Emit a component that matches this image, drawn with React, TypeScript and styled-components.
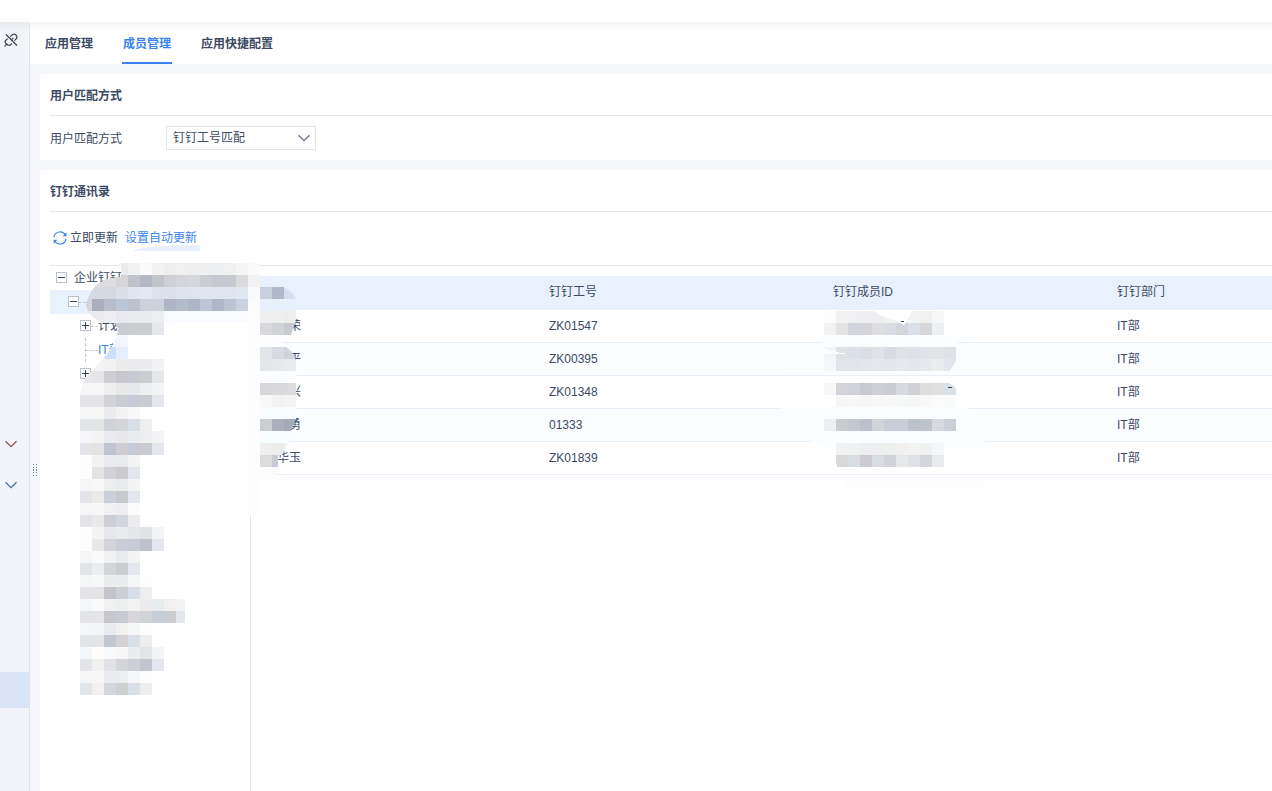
import React from 'react';
import styled, { createGlobalStyle, css } from 'styled-components';

const GlobalStyle = createGlobalStyle`
  * { box-sizing: border-box; }
  body {
    margin: 0;
    background: #fff;
    color: #3b4963;
    font-family: "Liberation Sans", "Noto Sans CJK SC", sans-serif;
    font-size: 12px;
    line-height: 18px;
  }
  button, select { font: inherit; color: inherit; }
`;

const Page = styled.div`
  display: flex;
  flex-direction: column;
  height: 100vh;
  overflow: hidden;
`;

const TopBar = styled.header`
  flex: none;
  height: 22px;
  background: #fff;
`;

const Body = styled.div`
  display: flex;
  flex: 1;
  min-height: 0;
`;

const Sidebar = styled.nav`
  flex: none;
  display: flex;
  flex-direction: column;
  width: 30px;
  border-right: 1px solid #dfe3ea;
  background: linear-gradient(#e9ebef, #f2f4f9 10px);
`;

const SideButton = styled.button<{ $color?: string; $active?: boolean; $push?: number }>`
  flex: none;
  display: flex;
  align-items: center;
  height: 36px;
  margin: ${(p) => p.$push ?? 0}px 0 0;
  padding: 0 0 0 4px;
  border: 0;
  background: ${(p) => (p.$active ? '#d9e4f7' : 'transparent')};
  color: ${(p) => p.$color ?? '#39404d'};
`;

const Main = styled.main`
  flex: 1;
  min-width: 0;
  display: flex;
  flex-direction: column;
  background: #f6f7fa;
`;

const Tabs = styled.div`
  flex: none;
  display: flex;
  gap: 28px;
  height: 42px;
  padding-left: 14px;
  background: linear-gradient(#f4f5f6, #fff 10px);
`;

const Tab = styled.button<{ $active?: boolean }>`
  padding: 4px 1px 0;
  border: 0;
  border-bottom: 2px solid transparent;
  background: none;
  font-weight: 700;
  ${(p) =>
    p.$active &&
    css`
      color: #3a84f0;
      border-bottom-color: #3a84f0;
    `}
`;

const Content = styled.div`
  flex: 1;
  min-height: 0;
  display: flex;
`;

const Gutter = styled.div`
  flex: none;
  width: 10px;
  padding: 400px 0 0 3px;
`;

const Panels = styled.div`
  flex: 1;
  min-width: 0;
  display: flex;
  flex-direction: column;
  gap: 10px;
  padding-top: 10px;
`;

const Card = styled.section<{ $grow?: boolean }>`
  position: relative;
  display: flex;
  flex-direction: column;
  flex: ${(p) => (p.$grow ? '1' : 'none')};
  min-height: 0;
  padding-left: 10px;
  background: #fff;
`;

const CardTitle = styled.h2`
  flex: none;
  margin: 0;
  height: 42px;
  border-bottom: 1px solid #e7e8ea;
  font-size: 12px;
  line-height: 44px;
`;

const Field = styled.div`
  display: flex;
  align-items: center;
  height: 44px;
`;

const Label = styled.label`
  width: 116px;
  padding-top: 2px;
`;

const SelectBox = styled.span`
  display: grid;
  align-items: center;
  width: 150px;
  height: 24px;
  border: 1px solid #e3e5e8;
  > * { grid-area: 1 / 1; }
  > svg { justify-self: end; margin-right: 5px; color: #66728a; pointer-events: none; }
`;

const Select = styled.select`
  appearance: none;
  width: 100%;
  height: 22px;
  padding: 0 24px 0 6px;
  border: 0;
  background: transparent;
`;

const Toolbar = styled.div`
  flex: none;
  display: flex;
  align-items: center;
  gap: 7px;
  height: 54px;
  padding: 0 0 2px 3px;
  border-bottom: 1px solid #e7e8ea;
`;

const ToolButton = styled.button`
  display: flex;
  align-items: center;
  gap: 3px;
  padding: 0;
  border: 0;
  background: none;
`;

const ToolLink = styled.a`
  color: #3a84f0;
  text-decoration: none;
`;

const Split = styled.div`
  flex: 1;
  min-height: 0;
  display: flex;
`;

const Tree = styled.ul`
  flex: none;
  width: 201px;
  margin: 0;
  padding: 0;
  border-right: 1px solid #e6e7e9;
  list-style: none;
`;

const TreeRow = styled.li<{ $level: number; $selected?: boolean; $link?: boolean }>`
  display: flex;
  align-items: center;
  height: 24px;
  padding-left: ${(p) => 6 + p.$level * 12}px;
  background: ${(p) => (p.$selected ? '#e8f1fd' : 'transparent')};
  color: ${(p) => (p.$link ? '#3a84f0' : 'inherit')};
`;

const TreeLabel = styled.span<{ $root?: boolean }>`
  padding-left: ${(p) => (p.$root ? 7 : 0)}px;
`;

const Toggle = styled.button`
  display: flex;
  padding: 0 0 1px;
  border: 0;
  background: transparent;
`;

const Dash = styled.span<{ $wide?: boolean }>`
  width: ${(p) => (p.$wide ? 12 : 7)}px;
  border-top: 1px dashed #c4c8cf;
`;

const Stem = styled.span`
  width: 6px;
  height: 24px;
  border-right: 1px dashed #c4c8cf;
`;

const TableArea = styled.div`
  flex: 1;
  min-width: 0;
  overflow: hidden;
  padding: 10px 0 0 9px;
`;

const Table = styled.table`
  width: 1136px;
  table-layout: fixed;
  border-collapse: separate;
  border-spacing: 0;
  text-align: left;
`;

const HeadCell = styled.th`
  height: 34px;
  padding: 0 5px 2px;
  background: #e8f1fd;
  font-weight: 400;
`;

const Row = styled.tr`
  &:nth-child(even) { background: #fafcff; }
`;

const Cell = styled.td`
  height: 33px;
  padding: 0 5px;
  border-bottom: 1px solid #e8f0fb;
`;

const Name = styled.span`
  display: inline-block;
  width: 36px;
  text-align: right;
`;

const MaskLayer = styled.svg`
  position: absolute;
  top: 0;
  left: 0;
  width: 100%;
  height: 100%;
  pointer-events: none;
`;

const Chevron = () => (
  <svg width="13" height="8" viewBox="0 0 13 8" fill="none" stroke="currentColor" strokeWidth="1.2" aria-hidden="true">
    <path d="M1.5 1.2 7 6.6 12.5 1.2" />
  </svg>
);

const PlugIcon = () => (
  <svg width="14" height="14" viewBox="0 0 14 14" fill="none" stroke="currentColor" strokeWidth="1.2" aria-hidden="true">
    <path d="M2 1.5 13 12.5" />
    <path d="M6.3 3.6 8.4 1.6Q10.4 .4 12.1 2.1Q13.6 3.8 12.4 5.6L10.4 7.7" />
    <path d="M3.6 5.6 1.4 7.7Q.6 9 1.8 10.2L3.8 12Q5.2 12.8 6.4 11.8L8 10.4" />
    <path d="M.6 13.4 2.6 11.2M9.4 4.8 7.6 6.6" />
  </svg>
);

const RefreshIcon = () => (
  <svg width="14" height="14" viewBox="0 0 14 14" fill="none" stroke="#3a84f0" strokeWidth="1.1" aria-hidden="true">
    <path d="M1 6.4A6 6 0 0 1 12.4 4.4M13 7.6A6 6 0 0 1 1.6 9.6" />
    <path d="M13.4 1.2v4H9.6ZM.6 12.8v-4h3.8Z" fill="#3a84f0" stroke="none" />
  </svg>
);

const Expander = ({ open, name }: { open?: boolean; name: string }) => (
  <Toggle type="button" aria-expanded={!!open} aria-label={name}>
    <svg width="11" height="11" viewBox="0 0 11 11" fill="none" aria-hidden="true">
      <rect x=".5" y=".5" width="10" height="10" fill="#fff" stroke="#bcc1cc" />
      <path d={open ? 'M2 5.5h7' : 'M2 5.5h7M5.5 2v7'} stroke="#36445f" />
    </svg>
  </Toggle>
);

const Grip = () => (
  <svg width="5" height="13" viewBox="0 0 5 13" fill="#6f80a8" aria-hidden="true">
    {[0, 3, 5, 6, 8, 11].map((y) => (
      <path key={y} d={`M0 ${y}h1v1H0zM3 ${y}h1v1H3z`} />
    ))}
  </svg>
);

const CELL = 12;

/* Mosaic rows: first column, row number, one colour for each cell. */
type MosaicRow = [number, number, string];

const treeMosaic: MosaicRow[] = [
  [3, 0, 'ececee f1f2f4 fafafa f2f2f3 eeeeef f0f0f1 f0eff0 eeeff1 eeeff1 eff0f0 f5f5f6 fafafb'],
  [0, 1, 'dedee2 dedee2 dedee2 d5d5da c0c3c8 b4b8c4 c2c6cc cfcfd5 d5d4d8 d5d8db cccdd1 c6c9d0 c6c9d0 d9dbdd f2f2f2'],
  [0, 2, 'd5d9e1 d5d9e1 d5d9e1 dbdfe6 e0e5f0 e2e7f1 dce2ec dbe0ea dde4ee dee5ee dfe4ef e0e6f0 dee5ef e1e7f1 f7f9fc'],
  [0, 3, 'd5d5db a9afbd b7bdc9 bbc7d6 bcc2cd cdd1da ccd1dc aeb5c4 b3bcc9 aeb6c5 bec5d4 b0b8c8 bcc4d3 cad0de fafbfd'],
  [0, 4, 'eaeaec eaeaec eeeef0 e8e9ee e9ebef eaebee ecedf1 fafbfe fafbfe fafbfe fafbfe fafbfe fafbfe fafbfe fcfcfd'],
  [3, 5, 'cbccd1 cccdd1 cdced2 e4e7eb'],
  [2, 6, 'f3f6ff f3f6ff'],
  [2, 7, 'cddefb e6eefd'],
  [0, 8, 'f4f4f5 f4f4f5 f1f1f2 ececed eaebec ececee f1f2f4'],
  [0, 9, 'e8e8eb e5e5e7 cfcfd3 c8c9ce c6cbd4 cccdd1 e4e6ea'],
  [0, 10, 'f5f6f7 f6f6f6 efeff0 e8e8ea e6e9ec edeef0 f2f3f5'],
  [0, 11, 'e3e4e8 e4e4e6 d2d2d7 c9cdd1 c6cad6 cacbcf e3e7ed'],
  [0, 12, 'f5f6f8 f6f6f5 ebecf0 f3f3f3 f7f8fa'],
  [0, 13, 'e2e5e8 e3e4e4 d1d2d6 d3d5d8 d8dfe6 edefef'],
  [0, 14, 'f4f6f9 f3f3f3 e9eaee e8e8ea e8ecee eeeef0 f2f3f5'],
  [0, 15, 'e3e4e9 e2e2e2 bfc4d0 cecdd2 c6cad6 cbcbcf e3e7ed'],
  [0, 16, 'fcfcfc f2f2f2 eaebee e9eaed f1f3f5'],
  [0, 17, 'fdfdfd e4e4e4 d1d2d7 cbcbd0 e3e7ed'],
  [0, 18, 'f4f6f8 f8f8f8 ecedef e9eaec f2f4f6'],
  [0, 19, 'e3e4e9 ece9e9 cbcfda c8c9cd e3e7ed'],
  [0, 20, 'f5f6f8 f7f7f7 f1eff2 eeeef0 fafbfd'],
  [0, 21, 'e2e4e8 eaeaea cecfd5 d3d6de ebedef'],
  [0, 22, 'fdfdfd f4f4f4 e7e8eb eaebed e5e6e9 e1e2e5 f2f3f5'],
  [0, 23, 'fdfdfd e9e9e9 d3d4d8 c9cdd8 c7cbd6 bfc2cd e3e7ed'],
  [0, 24, 'f5f6f8 fafafa f0f1f2 e9eaec f2f3f5'],
  [0, 25, 'e2e4e8 ecedef d4d5d8 cbcdd1 e4e7ed'],
  [0, 26, 'f5f6f8 f7f8f8 ebecee ebecee f5f6f8 fcfdfd'],
  [0, 27, 'e3e3e8 e4e4e6 c3c5ca cccfd4 d8dee7 edeef0'],
  [0, 28, 'f4f7f9 fafafa eff0f1 eceded f3f3f2 ececee e8ecef f1eff0 f3f4f6'],
  [0, 29, 'e3e4e8 e5e5e5 c6c8cc c8cbd3 d8d6db d0d3d8 c8ced8 cbccd0 e3e7ed'],
  [0, 30, 'f4f6f9 f3f5f8 eaebef f1f0ef f5f7f9 fcfdfd'],
  [0, 31, 'e2e4e8 e3e4e5 c3c7d2 d5d2d6 d9dfe7 edeef0'],
  [0, 32, 'f4f7f9 fefdfa f8f9fb f6f6f6 ebeced e3e4e8 f2f4f6'],
  [0, 33, 'e2e4e8 f1f1f1 e0e2e5 d5d6da cecfd5 c2c4cf e3e7ed'],
  [0, 34, 'f4f6f8 f7f7f8 ebecf1 ecedef f5f6f9 fcfdfd'],
  [0, 35, 'e2e5e9 f5f1f0 d3d7e0 cfd0d3 d9dfe7 edeef0'],
];

const nameMosaic: MosaicRow[] = [
  [15, 2, 'c8d0de b0b8ca d5dfef'],
  [15, 3, 'e8f1fb e8f1fb e8f1fb'],
  [15, 4, 'eeeeef efeff0 eceded'],
  [15, 5, 'd7d9dc d1d4d7 c7cad1'],
  [15, 6, 'fcfdfe fcfdfe fcfdfe'],
  [15, 7, 'e1e4e8 d7dae1 cfd4dc'],
  [15, 8, 'e4e7ea e6e8ea e8eaec'],
  [15, 9, 'fcfdfe fcfdfe fcfdfe'],
  [15, 10, 'd7d7db d9d9de dbdbde'],
  [15, 11, 'f8f8f8 f2f2f3 f4f4f4'],
  [15, 12, 'f7fcff f7fcff f7fcff'],
  [15, 13, 'cdced2 acb0bd a3aab9'],
  [15, 14, 'f7fcff f7fcff f7fcff'],
  [15, 15, 'efeff0 ececed f3f3f4'],
  [15, 16, 'dcdadd c8cad5'],
  [15, 17, 'fdfdfd fdfdfd'],
];

const idMosaic: MosaicRow[] = [
  [62, 4, 'fcfcfc f2f2f3 f0f0f2 efeff1 eeeff0 f0f1f2 f0f1f2 f2f3f4 f0f0f0 f5f6f7'],
  [62, 5, 'f3f3f3 e3e3e5 d2d6dc d5d5d9 dedede d9dde3 d3d5db dbdfe9 d7d6d9 ecf0f3'],
  [62, 7, 'f2f4f6 dfe1e6 dbe0e9 dcdee4 dfe2e7 d8dbe1 e0e2e6 dee1e7 e0e4e8 e1e3e7 dfe1e7'],
  [62, 8, 'f5f6f8 e2e4e9 e1e4e9 e3e6ea e5e8ea e3e6ea e5e8ec e3e6ea e6e9eb ebecee e2e5ed'],
  [62, 10, 'f7f7f7 d3d4d9 cfd2da c7c9ce cdd0d4 cbcdd2 d8d9de cfd1d6 dededf e0e0e0 d9e0e7'],
  [63, 11, 'f6f6f6 f7f7f7 f6f6f6 f7f7f7 f8f8f8 f6f7f7 f6f6f7 f8f8f8 fbfbfb f9fbfb'],
  [62, 13, 'eeeff2 c9cbcf c1c8d2 bcc1cb d0d4d9 c8ccd6 c8ccd6 bbc3ce bfc3cc d6d9de cacfda'],
  [63, 15, 'f2f2f2 f0f1f1 eeeff0 efefef eeefef f1f1f1 f3f3f3 f0f1f1 f5f6f8'],
  [63, 16, 'd8d8db d8dde1 cdccd2 d8dce1 d0d4da e6e7e9 dfe1e6 d5d6da e8eaee'],
];

const Mosaic = ({ rows }: { rows: MosaicRow[] }) => (
  <>
    {rows.flatMap(([col, row, colors]) =>
      colors.split(' ').map((color, i) => (
        <rect
          key={`${row}-${i}`}
          x={40 + (col + i) * CELL}
          y={93 + row * CELL}
          width={CELL}
          height={CELL}
          fill={`#${color}`}
        />
      )),
    )}
  </>
);

const Masks = () => (
  <MaskLayer aria-hidden="true" shapeRendering="crispEdges">
    <defs>
      <clipPath id="tree-clip">
        <path d="M81 93H220V252H145V525H40V223C42 210 54 198 64 188C72 178 77 168 79 157C62 154 48 148 46 135C50 118 60 107 81 107Z" />
      </clipPath>
      <clipPath id="name-clip">
        <path d="M220 117H243Q252 120 256 129L257 141L255 153L251 165H237L246 177Q253 181 256 190V249L251 261L249 273L242 285H238V297L236 309H220Z" />
      </clipPath>
      <clipPath id="id-clip">
        <path d="M784 141H834Q842 147 848 148Q856 150 864 155Q868 150 872 141H920V177H916V191L910 201H901Q904 210 916 218V297H904V309H800Q798 299 795 288H784Z" />
      </clipPath>
    </defs>
    <path d="M93 81Q104 75 160 75V81Z" fill="#e8f0fe" />
    <path d="M208 93H220V345H208Z" fill="#fdfdfd" />
    <path d="M779 165H933L925 170L906 177V189L901 201H742L747 185L784 177Z" fill="#fcfdff" />
    <path d="M741 237H926L939 245L942 255L945 273V279H792L752 265Q740 252 741 237Z" fill="#fafdff" />
    <path d="M800 309H951V317H806Z" fill="#fdfdfe" />
    <g clipPath="url(#tree-clip)"><Mosaic rows={treeMosaic} /></g>
    <g clipPath="url(#name-clip)"><Mosaic rows={nameMosaic} /></g>
    <g clipPath="url(#id-clip)"><Mosaic rows={idMosaic} /></g>
    <path d="M784 178Q796 183 810 184L784 184Z" fill="#fcfdff" />
    <path d="M861 151h3v1h-3zM908 217h4v1h-4z" fill="#36445f" />
  </MaskLayer>
);

const members = [
  ['荣', 'ZK01547', 'IT部'],
  ['平', 'ZK00395', 'IT部'],
  ['兴', 'ZK01348', 'IT部'],
  ['勇', '01333', 'IT部'],
  ['华玉', 'ZK01839', 'IT部'],
];

export default function App() {
  return (
    <Page>
      <GlobalStyle />
      <TopBar />
      <Body>
        <Sidebar aria-label="侧栏">
          <SideButton type="button" aria-label="连接"><PlugIcon /></SideButton>
          <SideButton type="button" aria-label="展开" $push={368} $color="#8a5350"><Chevron /></SideButton>
          <SideButton type="button" aria-label="展开" $push={5} $color="#3f6fa8"><Chevron /></SideButton>
          <SideButton type="button" aria-label="当前" $push={169} $active />
        </Sidebar>
        <Main>
          <Tabs role="tablist">
            <Tab type="button" role="tab">应用管理</Tab>
            <Tab type="button" role="tab" aria-selected="true" $active>成员管理</Tab>
            <Tab type="button" role="tab">应用快捷配置</Tab>
          </Tabs>
          <Content>
            <Gutter><Grip /></Gutter>
            <Panels>
              <Card>
                <CardTitle>用户匹配方式</CardTitle>
                <Field>
                  <Label htmlFor="match">用户匹配方式</Label>
                  <SelectBox>
                    <Select id="match" defaultValue="no">
                      <option value="no">钉钉工号匹配</option>
                    </Select>
                    <Chevron />
                  </SelectBox>
                </Field>
              </Card>
              <Card $grow>
                <CardTitle>钉钉通讯录</CardTitle>
                <Toolbar>
                  <ToolButton type="button"><RefreshIcon />立即更新</ToolButton>
                  <ToolLink href="#auto">设置自动更新</ToolLink>
                </Toolbar>
                <Split>
                  <Tree>
                    <TreeRow $level={0}><Expander open name="收起" /><TreeLabel $root>企业钉钉</TreeLabel></TreeRow>
                    <TreeRow $level={1} $selected><Expander open name="收起" /><Dash /></TreeRow>
                    <TreeRow $level={2}><Expander name="展开" /><Dash /><TreeLabel>计划</TreeLabel></TreeRow>
                    <TreeRow $level={2} $link><Stem /><Dash $wide /><TreeLabel>IT部</TreeLabel></TreeRow>
                    <TreeRow $level={2}><Expander name="展开" /><Dash /></TreeRow>
                  </Tree>
                  <TableArea>
                    <Table>
                      <thead>
                        <tr>
                          <HeadCell aria-label="姓名" />
                          <HeadCell>钉钉工号</HeadCell>
                          <HeadCell>钉钉成员ID</HeadCell>
                          <HeadCell>钉钉部门</HeadCell>
                        </tr>
                      </thead>
                      <tbody>
                        {members.map(([name, no, dept]) => (
                          <Row key={no}>
                            <Cell><Name>{name}</Name></Cell>
                            <Cell>{no}</Cell>
                            <Cell />
                            <Cell>{dept}</Cell>
                          </Row>
                        ))}
                      </tbody>
                    </Table>
                  </TableArea>
                </Split>
                <Masks />
              </Card>
            </Panels>
          </Content>
        </Main>
      </Body>
    </Page>
  );
}
